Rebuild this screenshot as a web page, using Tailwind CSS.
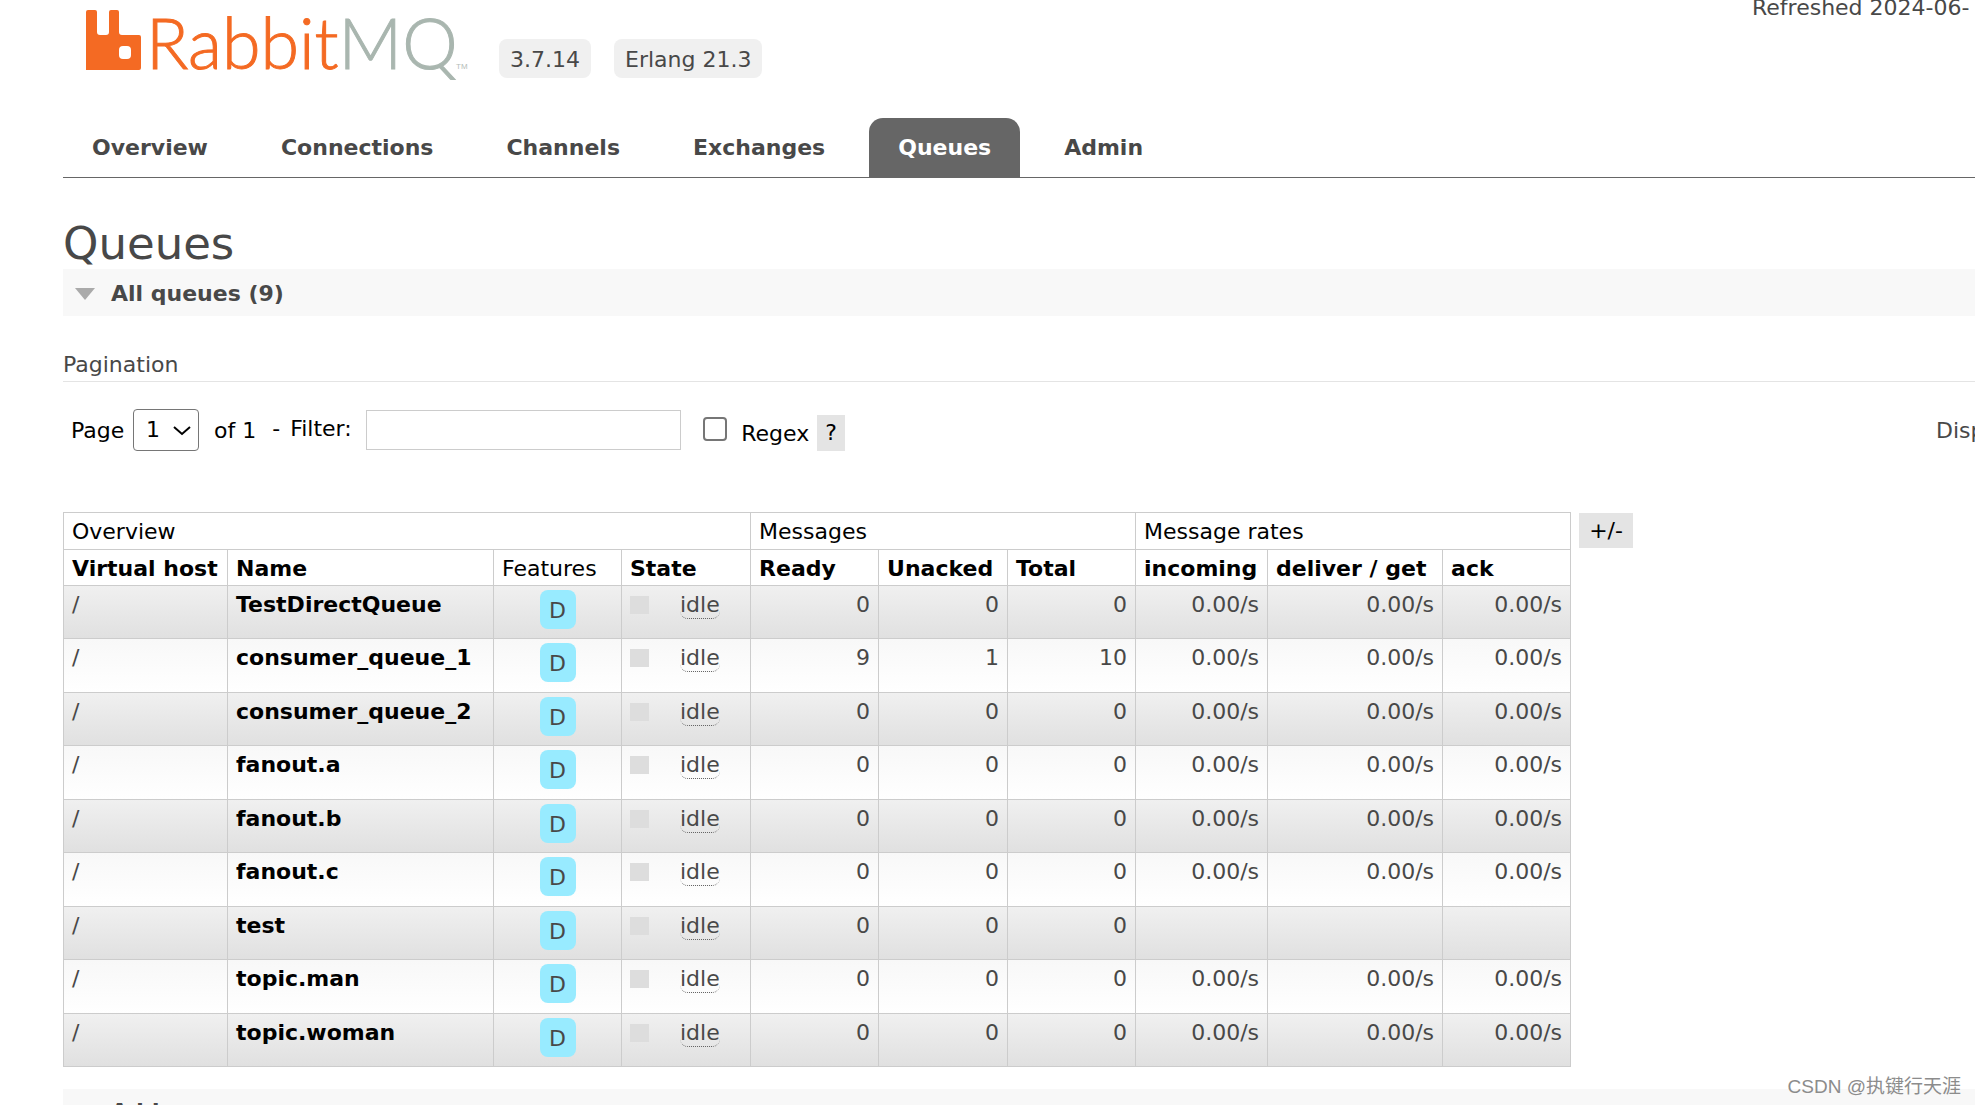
<!DOCTYPE html>
<html lang="en">
<head>
<meta charset="utf-8">
<title>RabbitMQ Management</title>
<script src="https://cdn.jsdelivr.net/npm/@tailwindcss/browser@4"></script>
</head>
<body class="relative h-screen overflow-hidden bg-white pl-[63px] font-['DejaVu_Sans',sans-serif] text-[22px] leading-7 whitespace-nowrap text-[#484848]">
  <header class="flex h-[118px] items-start justify-between">
    <div class="flex">
      <a href="#" aria-label="RabbitMQ" class="ml-[23px] block">
        <svg class="block h-[80px] w-[390px]" viewBox="86 0 390 80">
          <path fill="#f46a23" d="M88 10h7q2 0 2 2v20q0 3 3 3h6q3 0 3-3V12q0-2 2-2h6q2 0 2 2v20q0 3 3 3h17q2 0 2 2v31q0 2-2 2H86V12q0-2 2-2z"/>
          <rect x="119" y="46" width="12" height="13" rx="4" fill="#fff"/>
          <text x="146" y="69" font-family="Lato, sans-serif" font-size="70" font-weight="300" fill="#f46a23" stroke="#f46a23">Rabbit<tspan fill="#a9b6af" stroke="#a9b6af">MQ</tspan></text>
          <text x="456" y="69" font-family="'Liberation Sans', sans-serif" font-size="8" fill="#b5bdb9">TM</text>
        </svg>
      </a>
      <ul class="mt-[39px] ml-[23px] flex gap-[23px]">
        <li class="h-[39px] rounded-lg bg-[#f0f0f0] px-[11px] leading-[42px]">3.7.14</li>
        <li class="h-[39px] rounded-lg bg-[#f0f0f0] px-[11px] leading-[42px]">Erlang 21.3</li>
      </ul>
    </div>
    <div class="-mt-1.5 w-[223px]">Refreshed 2024-06-</div>
  </header>

  <nav class="flex h-[60px] gap-[15px] border-b border-[#666] font-bold leading-[60px]">
    <a href="#" class="px-[29px]">Overview</a>
    <a href="#" class="px-[29px]">Connections</a>
    <a href="#" class="px-[29px]">Channels</a>
    <a href="#" class="px-[29px]">Exchanges</a>
    <a href="#" class="rounded-t-[14px] bg-[#666] px-[29px] text-white">Queues</a>
    <a href="#" class="px-[29px]">Admin</a>
  </nav>

  <main>
    <h1 class="mt-[39px] h-[52px] text-[45px] leading-[54px]">Queues</h1>
    <h2 class="flex h-[47px] items-center bg-[#f8f8f8] pt-0.5 pl-3 font-bold">
      <svg class="mr-4 h-3 w-5" viewBox="0 0 20 12"><path fill="#aaa" d="M0 0h20L10 12z"/></svg>
      <button type="button">All queues (9)</button>
    </h2>

    <h3 class="mt-[34px] h-8 border-b border-[#e4e4e4] leading-[30px]">Pagination</h3>
    <div class="mt-[27px] flex h-[43px] items-start justify-between">
      <div class="flex items-start text-black">
        <label for="page" class="w-[70px] pl-2 leading-[44px]">Page</label>
        <span class="relative">
          <select id="page" class="h-[42px] w-[66px] appearance-none rounded border border-[#767676] bg-white pl-3">
            <option>1</option>
          </select>
          <svg class="pointer-events-none absolute top-[17px] right-2 h-[10px] w-[18px]" viewBox="0 0 18 10" fill="none" stroke="#000" stroke-width="2"><path d="M1 1l8 7 8-7"/></svg>
        </span>
        <span class="ml-[15px] leading-[44px]">of 1</span>
        <label for="filter" class="ml-4 flex w-[94px] gap-2.5 leading-10"><span>-</span>Filter:</label>
        <input id="filter" type="text" class="mt-px h-10 w-[315px] border border-[#ccc] px-1">
        <input id="regex" type="checkbox" class="mt-2 ml-[22px] size-6 appearance-none rounded border-2 border-[#767676] bg-white">
        <label for="regex" class="ml-[14px] leading-[50px]">Regex</label>
        <button type="button" class="mt-1.5 ml-2 h-9 w-7 bg-[#e4e4e4]">?</button>
      </div>
      <div class="w-[39px] leading-[44px]">Displaying</div>
    </div>

    <div class="mt-[60px] flex items-start">
      <table class="w-[1508px] table-fixed border-collapse text-right [&_td]:border [&_td]:border-[#ccc] [&_td]:px-2 [&_td]:py-0 [&_td]:align-top [&_td]:leading-[38px] [&_th]:border [&_th]:border-[#ccc] [&_th]:px-2 [&_th]:pt-0.5 [&_th]:pb-0 [&_th]:text-left [&_th]:text-black">
        <colgroup>
          <col class="w-[164px]"><col class="w-[266px]"><col class="w-[128px]"><col class="w-[129px]"><col class="w-[128px]"><col class="w-[129px]"><col class="w-[128px]"><col class="w-[132px]"><col class="w-[175px]"><col class="w-[128px]">
        </colgroup>
        <thead>
          <tr class="h-[37px] [&_th]:font-normal"><th colspan="4">Overview</th><th colspan="3">Messages</th><th colspan="3">Message rates</th></tr>
          <tr class="h-9">
            <th>Virtual host</th><th>Name</th><th class="font-normal">Features</th><th>State</th><th>Ready</th><th>Unacked</th><th>Total</th><th>incoming</th><th>deliver / get</th><th>ack</th>
          </tr>
        </thead>
        <tbody id="queues"></tbody>
      </table>
      <button type="button" class="mt-px ml-2 h-[35px] w-[54px] bg-[#e4e4e4] text-black">+/-</button>
    </div>

    <h2 class="mt-[22px] flex h-[46px] items-center bg-[#f8f8f8] pl-4 font-bold">
      <svg class="mr-5 h-3.5 w-3" viewBox="0 0 12 20"><path fill="#aaa" d="M0 0v20l12-10z"/></svg>
      <button type="button">Add a new queue</button>
    </h2>
  </main>

  <div class="absolute right-[14px] bottom-1 font-['Liberation_Sans','Noto_Sans_CJK_SC',sans-serif] text-[19px] leading-7 text-[#8c8c8c]">CSDN @执键行天涯</div>

  <script>
    const rate = '0.00/s';
    const queues = [
      ['TestDirectQueue', 0, 0, 0, rate],
      ['consumer_queue_1', 9, 1, 10, rate],
      ['consumer_queue_2', 0, 0, 0, rate],
      ['fanout.a', 0, 0, 0, rate],
      ['fanout.b', 0, 0, 0, rate],
      ['fanout.c', 0, 0, 0, rate],
      ['test', 0, 0, 0, ''],
      ['topic.man', 0, 0, 0, rate],
      ['topic.woman', 0, 0, 0, rate],
    ];
    document.getElementById('queues').innerHTML = queues.map(([name, ready, unacked, total, r]) => `
      <tr class="h-[54px] odd:h-[53px] bg-linear-to-b from-[#f8f8f8] to-white odd:from-[#f0f0f0] odd:to-[#e0e0e0]">
        <td class="text-left">/</td>
        <td class="text-left font-bold text-black"><a href="#">${name}</a></td>
        <td><abbr title="durable" class="mx-auto mt-1 block h-[39px] w-9 rounded-lg bg-[#98ebff] text-center leading-[41px] no-underline">D</abbr></td>
        <td><div class="flex text-left"><span class="mt-[10px] mr-[31px] h-[18px] w-[19px] bg-[#ddd]"></span><span class="mt-1 h-[29px] rounded-lg border-b border-dotted border-[#666] leading-[30px]">idle</span></div></td>
        <td>${ready}</td><td>${unacked}</td><td>${total}</td>
        <td>${r}</td><td>${r}</td><td>${r}</td>
      </tr>`).join('');
  </script>
</body>
</html>
